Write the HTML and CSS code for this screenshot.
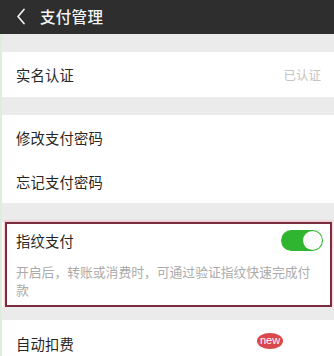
FILE: index.html
```html
<!DOCTYPE html>
<html lang="zh">
<head>
<meta charset="utf-8">
<link rel="stylesheet" href="styles.css">
</head>
<body>
<div class="page">
  <header class="bar">
    <svg class="back" width="10" height="17" viewBox="0 0 10 17"><path d="M8 1.5 L2 8.5 L8 15.5" fill="none" stroke="#f2f2f2" stroke-width="1.7" stroke-linecap="round" stroke-linejoin="round"/></svg>
    <span class="title">支付管理</span>
  </header>
  <div class="content">
    <div class="gap g1"></div>
    <div class="group">
      <div class="row r1"><span class="label">实名认证</span><span class="value">已认证</span></div>
    </div>
    <div class="gap g2"></div>
    <div class="group">
      <div class="row r2"><span class="label">修改支付密码</span></div>
      <div class="row r2"><span class="label">忘记支付密码</span></div>
    </div>
    <div class="gap g3"></div>
    <div class="group boxwrap">
      <div class="box">
        <div class="row r3"><span class="label">指纹支付</span><span class="toggle"><span class="knob"></span></span></div>
        <p class="desc">开启后，转账或消费时，可通过验证指纹快速完成付款</p>
      </div>
    </div>
    <div class="gap g4"></div>
    <div class="group">
      <div class="row r4"><span class="label">自动扣费</span><span class="badge">new</span></div>
    </div>
  </div>
</div>
</body>
</html>
```
FILE: styles.css
```css
html, body {
  margin: 0;
  padding: 0;
}
body {
  width: 334px;
  height: 356px;
  overflow: hidden;
  background: #ececec;
  font-family: "Noto Sans CJK SC", "Noto Sans", sans-serif;
}
.page {
  display: flex;
  flex-direction: column;
}
.bar {
  height: 34px;
  background: #2e2e2e;
  display: flex;
  align-items: center;
  padding-left: 16px;
  box-sizing: border-box;
}
.back {
  display: block;
  margin-top: -2px;
}
.title {
  margin-left: 14px;
  margin-top: -3px;
  color: #f4f4f4;
  font-size: 15.5px;
  font-weight: 500;
  letter-spacing: 0.3px;
}
.content {
  border-left: 2px solid #dcefdc;
  display: flex;
  flex-direction: column;
}
.gap { background: #ebebeb; }
.g1 { height: 18px; }
.g2 { height: 18px; }
.g3 { height: 19px; }
.g4 { height: 13px; }
.group {
  background: #fff;
}
.row {
  display: flex;
  align-items: center;
  justify-content: space-between;
  padding: 0 13px 0 14px;
}
.r1 { height: 45px; }
.r2 { height: 44px; }
.r4 { height: 40px; align-items: flex-start; padding-top: 13px; padding-right: 51px; }
.label {
  font-size: 14.3px;
  color: #262626;
  letter-spacing: 0.2px;
}
.value {
  font-size: 12.5px;
  color: #c4c4c4;
}
.boxwrap {
  padding: 0 2px 0 3px;
}
.box {
  border: 2px solid #7a2d3d;
  box-shadow: 0 0 2px 1px rgba(240, 130, 150, 0.45);
  padding-bottom: 6px;
}
.box .row {
  height: 32px;
  padding: 0 7px 0 9px;
}
.toggle {
  width: 42px;
  height: 21px;
  border-radius: 11px;
  background: #2fb52f;
  display: flex;
  justify-content: flex-end;
  align-items: center;
  padding-right: 1px;
  box-sizing: border-box;
}
.knob {
  width: 19px;
  height: 19px;
  border-radius: 50%;
  background: #fbfbfb;
}
.desc {
  margin: 7px 10px 0 9px;
  font-size: 12.8px;
  line-height: 18px;
  color: #ababab;
}
.badge {
  width: 26px;
  height: 16px;
  border-radius: 50%;
  background: #d9484c;
  color: #fff;
  font-size: 11px;
  line-height: 15px;
  text-align: center;
  font-family: "Liberation Sans", sans-serif;
}
```
